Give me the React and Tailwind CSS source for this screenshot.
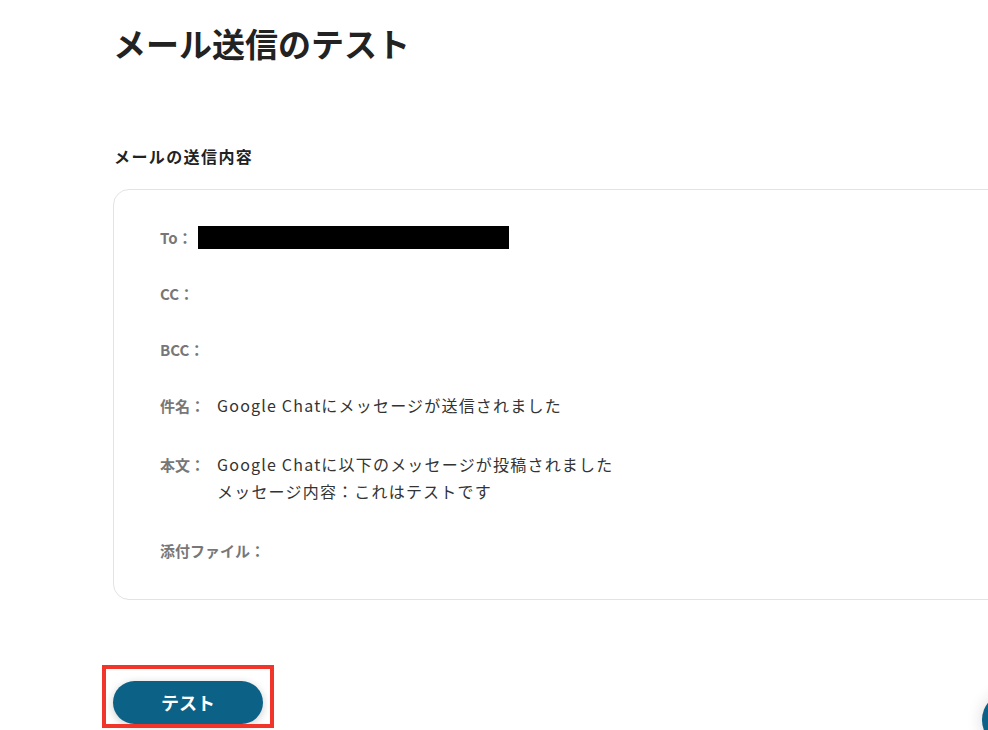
const font = { fontFamily: '"Noto Sans CJK JP", "Noto Sans", sans-serif' };

const rows = [
  { label: 'To：', redacted: true },
  { label: 'CC：' },
  { label: 'BCC：' },
  { label: '件名：', value: ['Google Chatにメッセージが送信されました'] },
  { label: '本文：', value: ['Google Chatに以下のメッセージが投稿されました', 'メッセージ内容：これはテストです'], extra: true },
  { label: '添付ファイル：', extra: true },
];

export default function App() {
  return (
    <div style={font} className="relative w-[988px] h-[730px] overflow-hidden bg-white text-[#222]">
      <div className="pl-[113px] pt-[18px]">
        <h1 className="text-[33px] leading-[50px] font-bold text-[#222]">メール送信のテスト</h1>

        <h2 className="mt-[75px] text-[16px] leading-[26px] font-bold tracking-[1.4px] text-[#222] pl-px">メールの送信内容</h2>

        <div className="mt-[20px] w-[920px] rounded-[16px] border border-[#e3e3e3] pl-[46px] pt-[34px] pb-[35px]">
          <div className="flex flex-col gap-[29px]">
            {rows.map(r => (
              <div key={r.label} className={`flex items-start text-[15px] leading-[27px] ${r.extra ? 'mt-[3px]' : ''}`}>
                <span className="font-semibold text-[#777]">{r.label}</span>
                {r.redacted && <span className="ml-[5px] mt-[2px] w-[311px] h-[23px] bg-black" />}
                {r.value && (
                  <div className="ml-[12px] text-[16px] text-[#333] tracking-[1.2px]">
                    {r.value.map(v => <div key={v}>{v}</div>)}
                  </div>
                )}
              </div>
            ))}
          </div>
        </div>

        <button className="mt-[81px] w-[150px] h-[43px] rounded-full bg-[#0c6186] text-white text-[18px] font-bold shadow-[0_2px_8px_rgba(0,0,0,0.2)]">
          テスト
        </button>
      </div>

      <div className="absolute left-[102px] top-[665px] w-[172px] h-[63px] border-4 border-[#f2352b]" />
      <div className="absolute left-[982px] top-[692px] w-[56px] h-[56px] rounded-full bg-[#0c6186] shadow-[0_0_16px_rgba(0,0,0,0.15)]" />
    </div>
  );
}
